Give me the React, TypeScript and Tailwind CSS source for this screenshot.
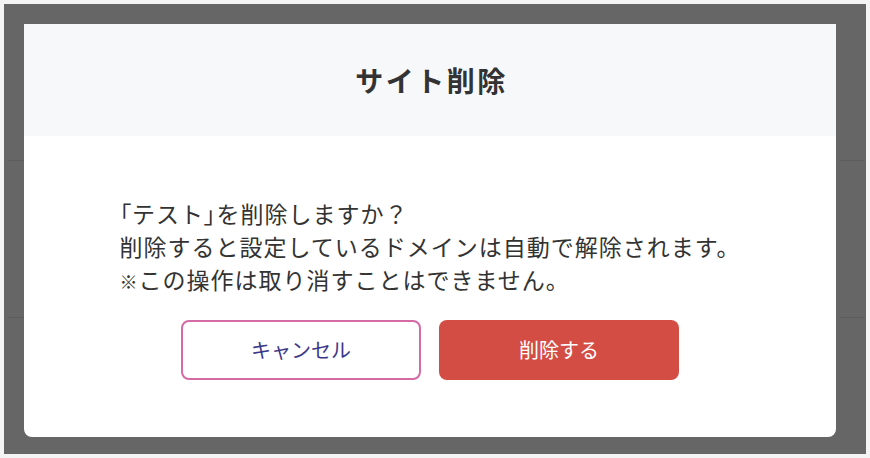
import React from "react";

export default function App() {
  return (
    <div
      className="h-[458px] w-[870px] bg-[#f4f4f4] p-1"
      style={{ fontFamily: '"Noto Sans CJK JP", "Noto Sans", sans-serif' }}
    >
      <div className="relative flex h-[450px] w-[862px] bg-[#666666] pl-5 pr-[30px] pt-5">
        <div className="absolute left-1 top-[156px] h-px w-4 bg-[#5c5c5c]" />
        <div className="absolute right-[2px] top-[156px] h-px w-6 bg-[#5c5c5c]" />
        <div className="absolute left-1 top-[313px] h-px w-4 bg-[#5c5c5c]" />
        <div className="absolute right-[2px] top-[313px] h-px w-6 bg-[#5c5c5c]" />
        <div className="relative flex h-[413px] w-[812px] flex-col overflow-hidden rounded-b-lg bg-white">
          <div className="flex h-[112px] items-center justify-center bg-[#f7f8fa]">
            <h1 className="pl-[3px] text-[28px] font-bold tracking-[2.5px] text-[#333333]">サイト削除</h1>
          </div>
          <div className="flex justify-center pt-[61px]">
            <div className="text-left text-[23px] leading-[33px] tracking-[1px] text-[#333333]">
              <p>
                <span className="[font-feature-settings:'palt']">「</span>テスト
                <span className="[font-feature-settings:'palt']">」</span>を削除しますか？
              </p>
              <p>削除すると設定しているドメインは自動で解除されます。</p>
              <p className="h-[33px]">
                <span className="text-[18px] leading-none">※</span>この操作は取り消すことはできません。
              </p>
            </div>
          </div>
          <div className="mt-[24px] flex justify-center gap-[18px]">
            <button className="flex h-[60px] w-[240px] items-center justify-center rounded-lg border-2 border-[#d46aa6] bg-white text-[20px] text-[#3b3787]">
              キャンセル
            </button>
            <button className="flex h-[60px] w-[240px] items-center justify-center rounded-lg bg-[#d44d45] text-[20px] text-white">
              削除する
            </button>
          </div>
        </div>
      </div>
    </div>
  );
}
